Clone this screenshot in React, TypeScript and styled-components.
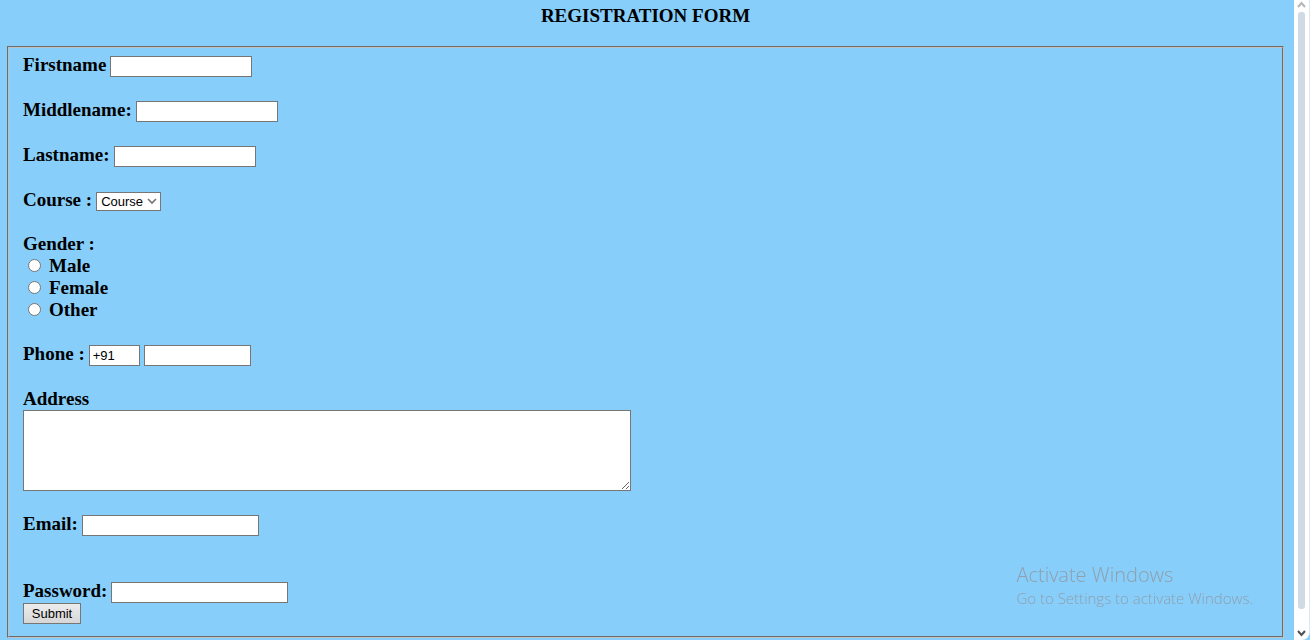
import React from "react";
import styled, { createGlobalStyle } from "styled-components";

const GlobalStyle = createGlobalStyle`
  *, *::before, *::after { box-sizing: border-box; }
  body { margin: 0; background: #87cefa; }
`;

const Shell = styled.div`
  display: flex;
  min-height: 100vh;
  background: #87cefa;
  color: #000;
  font: bold 19px/22px "Liberation Serif", serif;
`;

const Page = styled.main`
  flex: 1;
  min-width: 0;
  padding: 5px 10px 2px 7px;
`;

const Title = styled.h1`
  margin: 0 0 19px;
  font-size: 19px;
  line-height: 22px;
  text-align: center;
`;

const Panel = styled.fieldset`
  display: flex;
  flex-direction: column;
  align-items: flex-start;
  margin: 0;
  min-width: 0;
  padding: 7px 14px 12px;
  border: 2px groove #c0c0c0;
`;

const Row = styled.div<{ $after?: number }>`
  display: flex;
  align-items: flex-end;
  gap: 4px;
  height: 22px;
  margin-bottom: ${(p) => p.$after ?? 23}px;
`;

const Caption = styled.label`
  line-height: 20px;
  height: 22px;
  white-space: pre;
`;

const Input = styled.input<{ $width: number }>`
  width: ${(p) => p.$width}px;
  height: 21px;
  margin: 0;
  padding: 1px 3px;
  border: 1px solid #767676;
  border-radius: 0;
  background: #fff;
  color: #000;
  font: 13px "Liberation Sans", sans-serif;
`;

const SelectBox = styled.span`
  position: relative;
  display: flex;
  margin-bottom: 1px;
`;

const Select = styled.select`
  appearance: none;
  width: 65px;
  height: 19px;
  margin: 0;
  padding: 0 4px;
  border: 1px solid #767676;
  border-radius: 0;
  background: #fff;
  color: #000;
  font: 13px "Liberation Sans", sans-serif;
`;

const SelectArrow = styled.svg`
  position: absolute;
  right: 4px;
  top: 6px;
  pointer-events: none;
`;

const Group = styled.div`
  display: flex;
  flex-direction: column;
  margin: -1px 0 23px;
`;

const Choice = styled.label`
  display: flex;
  align-items: center;
  gap: 8px;
  height: 22px;
  padding-left: 5px;
`;

const Radio = styled.input`
  appearance: none;
  width: 13px;
  height: 13px;
  margin: 0 0 2px;
  border: 1px solid #767676;
  border-radius: 50%;
  background: #fff;

  &:checked {
    background: radial-gradient(#0075ff 0 3px, #fff 4px);
  }
`;

const AddressField = styled.div`
  display: flex;
  flex-direction: column;
  width: 608px;
  max-width: 100%;
  margin-bottom: 23px;
`;

const AddressCaption = styled.label`
  line-height: 22px;
`;

const Address = styled.textarea`
  display: block;
  height: 81px;
  margin: 0;
  padding: 2px;
  border: 1px solid #767676;
  border-radius: 0;
  background: #fff;
  font: 13px "Liberation Mono", monospace;
`;

const Submit = styled.button`
  width: 58px;
  height: 21px;
  padding: 0;
  border: 1px solid #767676;
  border-radius: 0;
  background: linear-gradient(#ededed, #d6d6d6);
  color: #000;
  font: 13px "Liberation Sans", sans-serif;
`;

const Rail = styled.div`
  display: flex;
  flex-direction: column;
  align-items: center;
  justify-content: space-between;
  width: 16px;
  padding: 1px 1px 3px 0;
  border-right: 1px solid #dbe6f0;
  border-bottom-right-radius: 8px;
  background: #fff;
`;

const Thumb = styled.div`
  flex: 1;
  width: 7px;
  margin: 3px 0 20px;
  border-radius: 3px;
  background: #cfdae4;
`;

const Notice = styled.aside`
  position: fixed;
  right: 57px;
  bottom: 32px;
  color: #8f9fac;
  font: 300 15px/20px "Open Sans", sans-serif;
  pointer-events: none;
`;

const NoticeTitle = styled.div`
  font-size: 20px;
  line-height: 26px;
`;

const Chevron = ({ up, color }: { up?: boolean; color: string }) => (
  <svg width="9" height="8" viewBox="0 0 9 8" aria-hidden="true">
    <path d={up ? "M1 6l3.5-4L8 6" : "M1 2l3.5 4L8 2"} fill="none" stroke={color} strokeWidth="2" />
  </svg>
);

interface FieldProps {
  id: string;
  label: string;
  width: number;
  type?: string;
  after?: number;
}

const Field = ({ id, label, width, type = "text", after }: FieldProps) => (
  <Row $after={after}>
    <Caption htmlFor={id}>{label}</Caption>
    <Input id={id} name={id} type={type} $width={width} />
  </Row>
);

export default function App() {
  return (
    <>
      <GlobalStyle />
      <Shell>
        <Page>
          <Title>REGISTRATION FORM</Title>
          <form onSubmit={(e) => e.preventDefault()}>
            <Panel>
              <Field id="firstname" label="Firstname" width={142} />
              <Field id="middlename" label="Middlename:" width={142} />
              <Field id="lastname" label="Lastname:" width={142} />
              <Row $after={22}>
                <Caption htmlFor="course">Course :</Caption>
                <SelectBox>
                  <Select id="course" name="course">
                    <option>Course</option>
                  </Select>
                  <SelectArrow width="10" height="7" viewBox="0 0 10 7" aria-hidden="true">
                    <path d="M1 1l4 4 4-4" fill="none" stroke="#767676" strokeWidth="1.7" />
                  </SelectArrow>
                </SelectBox>
              </Row>
              <Group role="radiogroup" aria-labelledby="gender">
                <span id="gender">Gender :</span>
                {["Male", "Female", "Other"].map((name) => (
                  <Choice key={name}>
                    <Radio type="radio" name="gender" value={name} />
                    {name}
                  </Choice>
                ))}
              </Group>
              <Row $after={22}>
                <Caption htmlFor="phone">Phone :</Caption>
                <Input $width={51} type="text" name="code" aria-label="Country code" defaultValue="+91" />
                <Input $width={107} id="phone" name="phone" type="text" />
              </Row>
              <AddressField>
                <AddressCaption htmlFor="address">Address</AddressCaption>
                <Address id="address" name="address" />
              </AddressField>
              <Field id="email" label="Email:" type="email" width={177} after={45} />
              <Field id="password" label="Password:" type="password" width={177} after={0} />
              <Submit type="submit">Submit</Submit>
            </Panel>
          </form>
        </Page>
        <Rail aria-hidden="true">
          <Chevron up color="#b5b5b5" />
          <Thumb />
          <Chevron color="#505050" />
        </Rail>
      </Shell>
      <Notice>
        <NoticeTitle>Activate Windows</NoticeTitle>
        Go to Settings to activate Windows.
      </Notice>
    </>
  );
}
